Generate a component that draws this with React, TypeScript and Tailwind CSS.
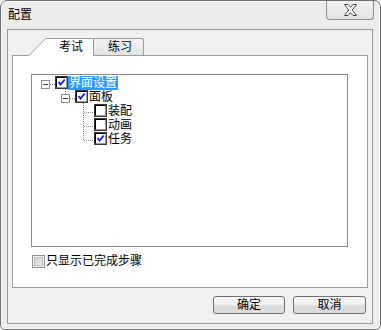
import React from 'react';

const cjk = "font-['Liberation_Sans','Noto_Sans_CJK_SC',sans-serif]";

function TreeCheck({ checked }: { checked?: boolean }) {
  return (
    <span className="flex h-[13px] w-[13px] shrink-0 border border-[#3a3a3a]">
      <span className="flex flex-1 items-center justify-center border border-t-black border-l-black border-r-[#9a9a9a] border-b-[#9a9a9a] bg-white">
        {checked && (
          <svg width="9" height="9" viewBox="0 0 9 9">
            <path d="M1.5 4 L3.5 6.5 L7.8 1.5" fill="none" stroke="#1818e6" strokeWidth="1.9" />
          </svg>
        )}
      </span>
    </span>
  );
}

function Expander() {
  return (
    <span className="mt-[4px] flex h-[9px] w-[9px] shrink-0 items-center justify-center border border-[#919191] bg-white">
      <span className="h-px w-[5px] bg-[#2b3a68]" />
    </span>
  );
}

type Node = { label: string; checked?: boolean; indent: number; expander?: boolean; selected?: boolean };

const nodes: Node[] = [
  { label: '界面设置', checked: true, indent: 9, expander: true, selected: true },
  { label: '面板', checked: true, indent: 29, expander: true },
  { label: '装配', indent: 62 },
  { label: '动画', indent: 62 },
  { label: '任务', checked: true, indent: 62 },
];

function TreeLines() {
  const h = (x1: number, x2: number, y: number) => (
    <line x1={x1} x2={x2} y1={y + 0.5} y2={y + 0.5} stroke="#8a8a8a" strokeDasharray="1 1" />
  );
  const v = (x: number, y1: number, y2: number) => (
    <line x1={x + 0.5} x2={x + 0.5} y1={y1} y2={y2} stroke="#8a8a8a" strokeDasharray="1 1" />
  );
  return (
    <svg className="pointer-events-none absolute left-0 top-0" width="120" height="80" shapeRendering="crispEdges">
      {h(18, 23, 9)}
      {v(33, 14, 19)}
      {h(38, 43, 23)}
      {v(51, 28, 66)}
      {h(52, 62, 37)}
      {h(52, 62, 51)}
      {h(52, 62, 65)}
    </svg>
  );
}

function Button({ label, width }: { label: string; width: string }) {
  return (
    <button
      className={`${width} h-[18px] rounded-[3px] border border-[#707070] bg-gradient-to-b from-[#f4f4f4] from-45% to-[#dcdcdc] to-55% text-[12px] leading-[16px] text-black`}
    >
      {label}
    </button>
  );
}

export default function App() {
  return (
    <div className={`h-[330px] w-[381px] bg-white ${cjk}`}>
      <div className="flex h-[330px] w-[381px] flex-col overflow-hidden rounded-t-[7px] rounded-b-[5px] border border-[#6e6e6e] bg-[#ececec] shadow-[inset_0_0_0_1px_#fafafa]">
        <div className="flex h-[28px] items-start">
          <span className="pl-[7px] pt-[6px] text-[12px] leading-[16px] text-black">配置</span>
          <div className="ml-auto mr-[6px] -mt-px flex h-[20px] w-[48px] items-center justify-center rounded-b-[4px] border border-t-0 border-[#8c8c8c] bg-gradient-to-b from-[#f2f2f2] to-[#e4e4e4]">
            <svg width="13" height="12" viewBox="0 0 13 12" className="mt-[1px]">
              <polygon
                points="0.5,0.5 4,0.5 6.5,3.4 9,0.5 12.5,0.5 8.3,6 12.5,11.5 9,11.5 6.5,8.6 4,11.5 0.5,11.5 4.7,6"
                fill="#ffffff"
                stroke="#45464a"
                strokeLinejoin="round"
              />
            </svg>
          </div>
        </div>

        <div className="ml-[6px] flex h-[295px] w-[366px] flex-col border border-[#9c9c9c] bg-[#f0f0f0]">
          <div className="ml-[4px] mt-[8px] w-[356px]">
            <div className="relative z-10 flex h-[17px] items-end pl-[16px]">
              <div className="relative mb-[-1px] h-[18px] w-[65px]">
                <svg className="absolute left-0 top-0" width="65" height="18" viewBox="0 0 65 18">
                  <polygon points="0,18 17,0.5 65,0.5 65,18" fill="#ffffff" />
                  <polyline points="0.5,18 17.5,0.5 64.5,0.5" fill="none" stroke="#9a9da4" />
                </svg>
                <span className="relative block pl-[31px] pt-[1px] text-[12px] leading-[16px] text-black">考试</span>
              </div>
              <div className="h-[17px] w-[51px] rounded-tr-[3px] border border-b-0 border-[#9a9da4] bg-gradient-to-b from-[#f4f4f4] to-[#e2e2e2] pl-[14px] text-[12px] leading-[16px] text-black">
                练习
              </div>
            </div>

            <div className="h-[233px] border border-[#9a9da4] bg-white">
              <div className="relative ml-[18px] mt-[18px] h-[173px] w-[317px] border border-[#828790] bg-white">
                <TreeLines />
                <div className="flex flex-col pt-[1px]">
                  {nodes.map((n) => (
                    <div key={n.label} className="flex h-[14px] items-start" style={{ paddingLeft: n.indent }}>
                      {n.expander && <Expander />}
                      <span className={n.expander ? 'ml-[5px]' : ''}>
                        <TreeCheck checked={n.checked} />
                      </span>
                      <span
                        className={`inline-block h-[14px] px-[1px] pt-[1px] text-[12px] leading-[13px] ${
                          n.selected ? 'bg-[#3399ff] text-white' : 'text-black'
                        }`}
                      >
                        {n.label}
                      </span>
                    </div>
                  ))}
                </div>
              </div>

              <div className="ml-[19px] mt-[6px] flex h-[16px] items-center gap-[1px]">
                <span className="flex h-[13px] w-[13px] items-center justify-center border border-[#8f8f8f] bg-[#f4f4f4]">
                  <span className="h-[9px] w-[9px] border border-[#b9bcc1] bg-gradient-to-br from-[#c8c8c8] to-[#f2f2f2]" />
                </span>
                <span className="text-[12px] leading-[16px] text-black">只显示已完成步骤</span>
              </div>
            </div>
          </div>

          <div className="mt-[8px] flex justify-end gap-[8px] pr-[6px]">
            <Button label="确定" width="w-[72px]" />
            <Button label="取消" width="w-[73px]" />
          </div>
        </div>
      </div>
    </div>
  );
}
